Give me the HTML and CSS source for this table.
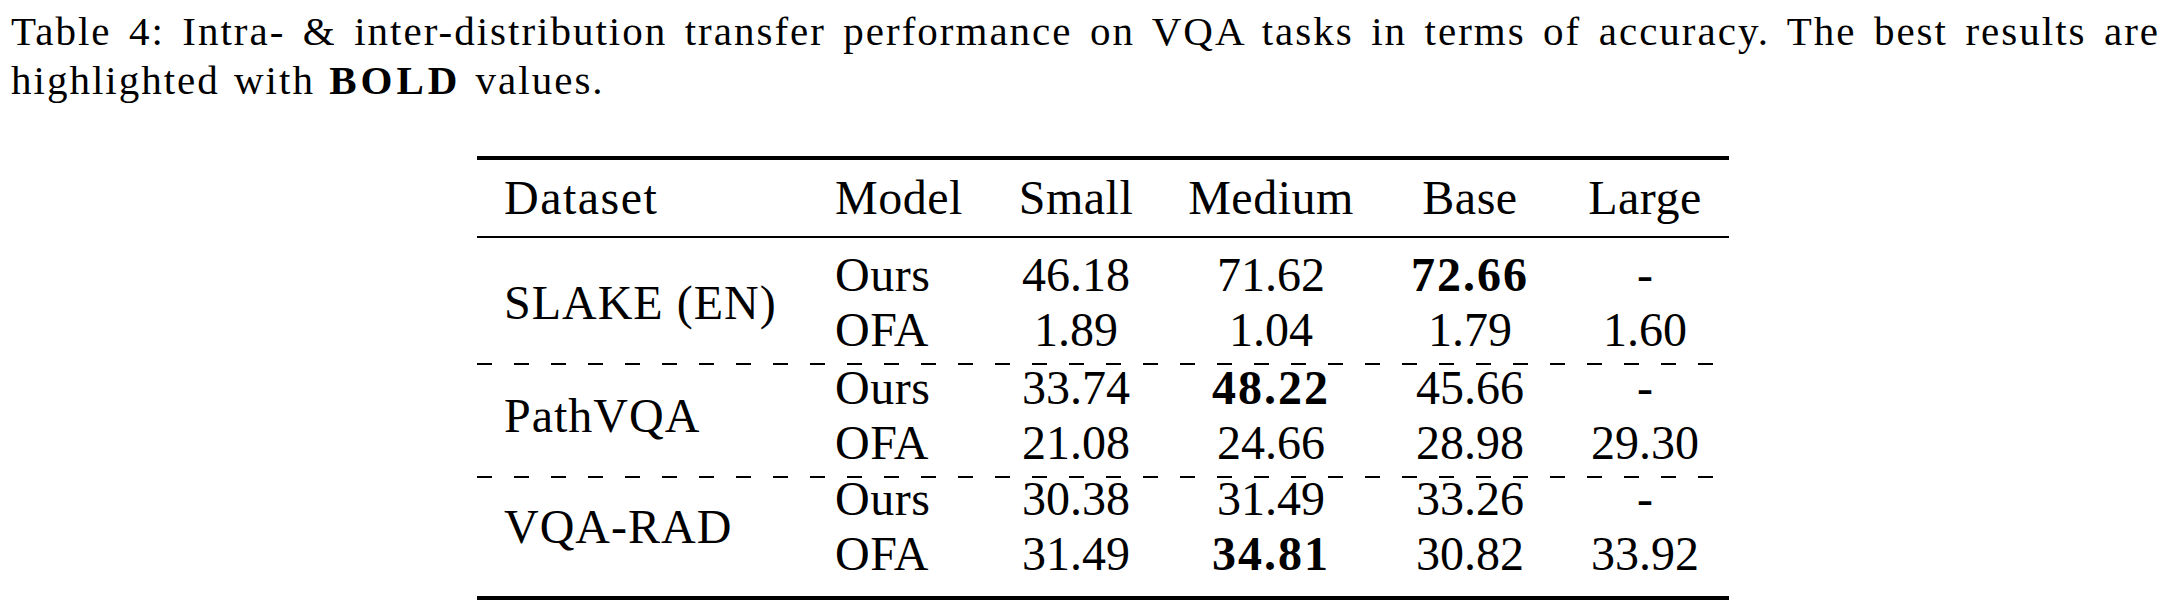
FILE: index.html
```html
<!DOCTYPE html>
<html lang="en">
<head>
<meta charset="utf-8">
<title>Table 4</title>
<link rel="stylesheet" href="styles.css">
</head>
<body>
<div class="page">
  <div class="caption">
    <div class="cap-line cap-justify">Table 4: Intra- &amp; inter-distribution transfer performance on VQA tasks in terms of accuracy. The best results are</div>
    <div class="cap-line">highlighted with <b>BOLD</b> values.</div>
  </div>

  <div class="tbl">
    <div class="grid head">
      <div class="cell left wide">Dataset</div>
      <div class="cell left">Model</div>
      <div class="cell">Small</div>
      <div class="cell">Medium</div>
      <div class="cell">Base</div>
      <div class="cell">Large</div>
    </div>

    <div class="grid group g1">
      <div class="cell left ds">SLAKE (EN)</div>
      <div class="cell left">Ours</div>
      <div class="cell num">46.18</div>
      <div class="cell num">71.62</div>
      <div class="cell num best">72.66</div>
      <div class="cell num">-</div>
      <div class="cell left">OFA</div>
      <div class="cell num">1.89</div>
      <div class="cell num">1.04</div>
      <div class="cell num">1.79</div>
      <div class="cell num">1.60</div>
    </div>

    <div class="grid group g2 dashed">
      <div class="cell left ds">PathVQA</div>
      <div class="cell left">Ours</div>
      <div class="cell num">33.74</div>
      <div class="cell num best">48.22</div>
      <div class="cell num">45.66</div>
      <div class="cell num">-</div>
      <div class="cell left">OFA</div>
      <div class="cell num">21.08</div>
      <div class="cell num">24.66</div>
      <div class="cell num">28.98</div>
      <div class="cell num">29.30</div>
    </div>

    <div class="grid group g3 dashed">
      <div class="cell left ds">VQA-RAD</div>
      <div class="cell left">Ours</div>
      <div class="cell num">30.38</div>
      <div class="cell num">31.49</div>
      <div class="cell num">33.26</div>
      <div class="cell num">-</div>
      <div class="cell left">OFA</div>
      <div class="cell num">31.49</div>
      <div class="cell num best">34.81</div>
      <div class="cell num">30.82</div>
      <div class="cell num">33.92</div>
    </div>
  </div>
</div>
</body>
</html>
```

FILE: styles.css
```css
html, body {
  margin: 0;
  padding: 0;
  background: #ffffff;
}

body {
  color: #000000;
  font-family: "Liberation Serif", "Times New Roman", serif;
}

.page {
  width: 2176px;
  height: 612px;
  overflow: hidden;
}

/* ---------- caption ---------- */
.caption {
  padding: 7px 16px 0 11px;
  font-size: 41px;
  line-height: 49px;
  letter-spacing: 2px;
  word-spacing: 2px;
}

.cap-line {
  white-space: nowrap;
}

.cap-justify {
  text-align: justify;
  text-align-last: justify;
}

.caption b {
  font-weight: 700;
  letter-spacing: 4px;
}

/* ---------- table ---------- */
.tbl {
  margin: 51px 0 0 477px;
  width: 1252px;
  border-top: 4px solid #000;
  border-bottom: 4px solid #000;
  font-size: 48px;
  letter-spacing: 0.5px;
}

.grid {
  display: grid;
  grid-template-columns: 331px 181px 174px 216px 182px 168px;
  grid-auto-rows: 46px;
  line-height: 46px;
}

.head {
  padding: 15px 0 15px;
  border-bottom: 2px solid #000;
}

.group {
  row-gap: 9px;
}

.g1 {
  padding: 14px 0 10px;
}

.g2 {
  padding: 2px 0 10px;
}

.g3 {
  padding: 0 0 19px;
}

.dashed {
  background-image: repeating-linear-gradient(to right, #000 0, #000 15px, transparent 15px, transparent 37px);
  background-size: 100% 2px;
  background-position: 0 0;
  background-repeat: no-repeat;
}

.cell {
  text-align: center;
  white-space: nowrap;
}

.cell.left {
  text-align: left;
  padding-left: 27px;
}

.wide {
  letter-spacing: 1.5px;
}

.ds {
  grid-row: 1 / span 2;
  align-self: center;
  letter-spacing: 1px;
}

.num {
  letter-spacing: 0;
}

.best {
  font-weight: 700;
  letter-spacing: 2px;
}
```
